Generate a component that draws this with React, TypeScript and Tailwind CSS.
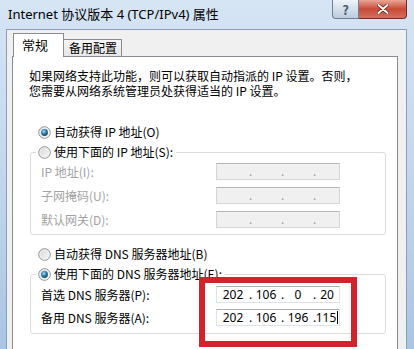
import React from "react";

const CJK = "font-['Noto_Sans_CJK_SC','Noto_Sans',sans-serif]";
const UI = "font-['Noto_Sans','Noto_Sans_CJK_SC',sans-serif]";

function Radio({ checked }: { checked?: boolean }) {
  return (
    <svg width="13" height="13" viewBox="0 0 13 13" className="shrink-0">
      <defs>
        <linearGradient id="radio-bg" x1="0" y1="0" x2="1" y2="1">
          <stop offset="0" stopColor="#d4d4d4" />
          <stop offset="1" stopColor="#fbfbfb" />
        </linearGradient>
        <radialGradient id="radio-dot" cx="0.4" cy="0.35" r="0.7">
          <stop offset="0" stopColor="#a8def5" />
          <stop offset="0.5" stopColor="#2f7fae" />
          <stop offset="1" stopColor="#123b55" />
        </radialGradient>
      </defs>
      <circle cx="6.5" cy="6.5" r="5.8" fill="url(#radio-bg)" stroke="#8c8f93" strokeWidth="1" />
      <circle cx="6.5" cy="6.5" r="4.6" fill="none" stroke="#f4f4f4" strokeWidth="0.8" />
      {checked && <circle cx="6.5" cy="6.5" r="3.4" fill="url(#radio-dot)" />}
    </svg>
  );
}

function IpField({
  parts = ["", "", "", ""],
  disabled,
  caret,
}: {
  parts?: string[];
  disabled?: boolean;
  caret?: boolean;
}) {
  return (
    <div
      className={`w-[124px] h-[17px] shrink-0 flex items-center border text-[12px] leading-none ${UI} ${
        disabled
          ? "bg-[#f0f0f0] border-[#d5d5d5] border-t-[#b8b8b8] text-[#9a9a9a]"
          : "bg-white border-[#dfe3e8] border-t-[#abadb3] text-black"
      }`}
    >
      <span className="w-[32px] text-center">{parts[0]}</span>
      <span className="w-[2px] text-center">.</span>
      <span className="w-[30px] text-center">{parts[1]}</span>
      <span className="w-[2px] text-center">.</span>
      <span className="w-[30px] text-center">{parts[2]}</span>
      <span className="w-[2px] text-center">.</span>
      <span className="flex-1 flex items-center justify-center">
        {parts[3]}
        {caret && <span className="inline-block w-px h-[13px] bg-black ml-[1px]" />}
      </span>
    </div>
  );
}

function Row({
  label,
  disabled,
  children,
  className = "",
}: {
  label: string;
  disabled?: boolean;
  children: React.ReactNode;
  className?: string;
}) {
  return (
    <div className={`flex items-center pl-[10px] ${className}`}>
      <span
        className={`w-[175px] text-[12px] leading-[17px] ${disabled ? "text-[#a2a2a2]" : "text-black"}`}
      >
        {label}
      </span>
      {children}
    </div>
  );
}

export default function App() {
  return (
    <div
      className={`relative w-[414px] h-[349px] overflow-hidden flex flex-col bg-gradient-to-b from-[#d6e5f4] via-[#c2d7ed] to-[#a9c5e4] ${CJK}`}
    >
      {/* Title bar */}
      <div className="h-[29px] shrink-0 flex items-start">
        <span className={`pl-[8px] pt-[6px] text-[13px] leading-[17px] text-black ${UI}`}>
          Internet 协议版本 4 (TCP/IPv4) 属性
        </span>
        <div className="ml-auto mr-[7px] flex">
          <div className="w-[27px] h-[19px] flex items-center justify-center rounded-bl-[4px] border border-t-0 border-[#6f7f94] bg-gradient-to-b from-[#eef3f8] via-[#d3dfeb] to-[#bccddf] text-[13px] font-bold text-[#4f5d70] leading-none">
            ?
          </div>
          <div className="w-[48px] h-[19px] flex items-center justify-center rounded-br-[4px] border border-t-0 border-l-0 border-[#7a2a22] bg-gradient-to-b from-[#e9a597] via-[#c84a36] to-[#d2705f]">
            <svg width="12" height="10" viewBox="0 0 12 10">
              <path d="M1.5 1 L10.5 9 M10.5 1 L1.5 9" stroke="#5a1a12" strokeWidth="3.4" strokeLinecap="round" />
              <path d="M1.5 1 L10.5 9 M10.5 1 L1.5 9" stroke="#ffffff" strokeWidth="2" strokeLinecap="round" />
            </svg>
          </div>
        </div>
      </div>

      {/* Window frame + client */}
      <div className="flex-1 flex pl-[6px] pr-[7px] min-h-0">
        <div className="flex-1 flex flex-col bg-[#f0f0f0] border border-[#8d9db2] border-b-0 min-h-0">
          {/* Tabs */}
          <div className="h-[26px] shrink-0 flex items-end pl-[6px] pt-[3px]">
            <div className="relative z-10 w-[51px] h-[24px] -mb-[1px] bg-white border border-b-0 border-[#898c95] pl-[8px] pt-[3px] text-[13px] leading-[16px] text-black">
              常规
            </div>
            <div className="w-[58px] h-[17px] border border-b-0 border-l-0 border-[#898c95] bg-gradient-to-b from-[#f6f6f6] to-[#e6e6e6] pl-[5px] text-[12px] leading-[16px] text-black">
              备用配置
            </div>
          </div>

          {/* Panel */}
          <div className="flex-1 ml-[5px] mr-[8px] bg-white border border-b-0 border-[#898c95] flex flex-col">
            <div className="mt-[11px] pl-[16px] text-[12px] text-black flex flex-col">
              <span className="h-[15px] leading-[15px]">如果网络支持此功能，则可以获取自动指派的 IP 设置。否则，</span>
              <span className="h-[15px] leading-[15px]">您需要从网络系统管理员处获得适当的 IP 设置。</span>
            </div>

            <div className="mt-[26px] h-[16px] flex items-center gap-[3px] pl-[25px] text-[12px] text-black">
              <Radio checked />
              <span>自动获得 IP 地址(O)</span>
            </div>

            {/* Fixed IP group */}
            <div className="mt-[12px] ml-[17px] mr-[11px] border border-[#dcdcdc] rounded-[3px] pb-[6px] flex flex-col">
              <div className="-mt-[9px] h-[16px] ml-[5px] self-start bg-white pl-[2px] pr-[3px] flex items-center gap-[3px] text-[12px] text-black">
                <Radio />
                <span>使用下面的 IP 地址(S):</span>
              </div>
              <Row label="IP 地址(I):" disabled className="mt-[3px]">
                <IpField disabled />
              </Row>
              <Row label="子网掩码(U):" disabled className="mt-[7px]">
                <IpField disabled />
              </Row>
              <Row label="默认网关(D):" disabled className="mt-[7px]">
                <IpField disabled />
              </Row>
            </div>

            <div className="mt-[11px] h-[16px] flex items-center gap-[3px] pl-[25px] text-[12px] text-black">
              <Radio />
              <span>自动获得 DNS 服务器地址(B)</span>
            </div>

            {/* DNS group */}
            <div className="mt-[12px] ml-[17px] mr-[11px] border border-[#dcdcdc] rounded-[3px] pb-[7px] flex flex-col">
              <div className="-mt-[9px] h-[16px] ml-[5px] self-start bg-white pl-[2px] pr-[3px] flex items-center gap-[3px] text-[12px] text-black">
                <Radio checked />
                <span>使用下面的 DNS 服务器地址(E):</span>
              </div>
              <Row label="首选 DNS 服务器(P):" className="mt-[4px]">
                <IpField parts={["202", "106", "0", "20"]} />
              </Row>
              <Row label="备用 DNS 服务器(A):" className="mt-[6px]">
                <IpField parts={["202", "106", "196", "115"]} caret />
              </Row>
            </div>
          </div>
        </div>
      </div>

      {/* Red highlight annotation */}
      <div className="absolute left-[199px] top-[277px] w-[158px] h-[70px] border-[6px] border-[#d2232c] z-20" />
    </div>
  );
}
